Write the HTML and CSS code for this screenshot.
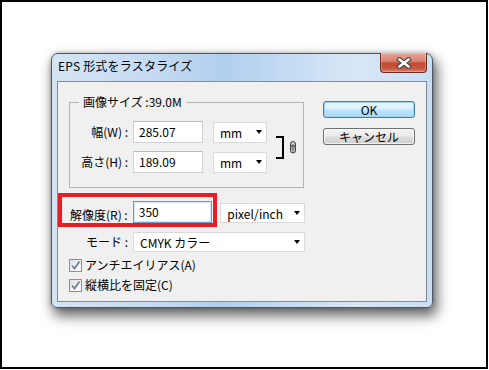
FILE: index.html
```html
<!DOCTYPE html>
<html lang="ja">
<head>
<meta charset="utf-8">
<title>EPS 形式をラスタライズ</title>
<link rel="stylesheet" href="styles.css">
</head>
<body>
<div class="frame">
  <div class="dialog">
    <div class="titlebar">
      <span class="title">EPS 形式をラスタライズ</span>
      <div class="close">
        <svg width="16" height="12" viewBox="0 0 16 12"><path d="M3.5 2.5 L12.5 9.5 M12.5 2.5 L3.5 9.5" stroke="#3f3f3f" stroke-width="4.6" stroke-linecap="square"/><path d="M3.5 2.5 L12.5 9.5 M12.5 2.5 L3.5 9.5" stroke="#ffffff" stroke-width="2.6" stroke-linecap="square"/></svg>
      </div>
    </div>
    <div class="client">
      <div class="left">
        <fieldset class="group">
          <legend>画像サイズ :39.0M</legend>
          <div class="group-body">
            <div class="dims">
              <div class="row">
                <span class="lbl">幅(W) :</span>
                <div class="input w70">285.07</div>
                <div class="select s-mm">mm<i class="arrow"></i></div>
              </div>
              <div class="row">
                <span class="lbl">高さ(H) :</span>
                <div class="input w70">189.09</div>
                <div class="select s-mm">mm<i class="arrow"></i></div>
              </div>
            </div>
            <div class="bracket"></div>
            <svg class="chain" width="8" height="13" viewBox="0 0 8 13"><rect x="1.5" y="0.5" width="5" height="7.5" rx="2.5" fill="#cfcfcf" stroke="#3a3a3a"/><rect x="1.5" y="4.5" width="5" height="7.5" rx="2.5" fill="#b8b8b8" stroke="#3a3a3a"/><line x1="4" y1="3" x2="4" y2="9.5" stroke="#555"/></svg>
          </div>
        </fieldset>
        <div class="row res-row">
          <span class="lbl lbl-out">解像度(R) :</span>
          <div class="input w80 focus">350</div>
          <div class="select s-unit">pixel/inch<i class="arrow"></i></div>
          <div class="highlight"></div>
        </div>
        <div class="row mode-row">
          <span class="lbl lbl-out">モード :</span>
          <div class="select s-mode">CMYK カラー<i class="arrow"></i></div>
        </div>
        <div class="checks">
          <div class="check-row">
            <span class="cb"><svg width="11" height="11" viewBox="0 0 11 11"><path d="M2 5.5 L4.5 8.5 L9.5 1.5" fill="none" stroke="#6d7fa0" stroke-width="1.8"/></svg></span>
            <span class="cb-label">アンチエイリアス(A)</span>
          </div>
          <div class="check-row">
            <span class="cb"><svg width="11" height="11" viewBox="0 0 11 11"><path d="M2 5.5 L4.5 8.5 L9.5 1.5" fill="none" stroke="#6d7fa0" stroke-width="1.8"/></svg></span>
            <span class="cb-label">縦横比を固定(C)</span>
          </div>
        </div>
      </div>
      <div class="buttons">
        <div class="btn btn-default">OK</div>
        <div class="btn">キャンセル</div>
      </div>
    </div>
  </div>
</div>
</body>
</html>
```
FILE: styles.css
```css
* { box-sizing: border-box; }
html, body { margin: 0; padding: 0; background: #fff; }
body { font-family: "Noto Sans CJK JP", "Noto Sans", sans-serif; font-size: 12px; color: #000; }

.frame {
  width: 488px;
  height: 369px;
  border: 2px solid #000;
  padding: 51px 0 0 49px;
  background: #fff;
}

.dialog {
  width: 382px;
  height: 255px;
  border: 1px solid #4b5666;
  border-radius: 7px 7px 6px 6px;
  padding: 0 5px 5px 5px;
  background: linear-gradient(90deg, #d5e4f4 0%, #c6dbf2 25%, #b2cfee 45%, #c4dbf3 62%, #d8e7f6 80%, #c9ddf3 100%);
  box-shadow: 3px 7px 13px 1px rgba(0,0,0,0.6), 0 0 4px rgba(0,0,0,0.25);
  display: flex;
  flex-direction: column;
}

.titlebar {
  height: 27px;
  display: flex;
  justify-content: space-between;
  align-items: flex-start;
}
.title {
  padding: 4px 0 0 1px;
  line-height: 16px;
  font-size: 12px;
  color: #000;
  letter-spacing: 0.2px;
}
.close {
  width: 47px;
  height: 20px;
  margin-top: -1px;
  border: 1px solid #6b2a22;
  border-top: none;
  border-radius: 0 0 4px 4px;
  background: linear-gradient(180deg, #e9a797 0%, #d98472 40%, #c24a36 55%, #c8553f 80%, #d9826a 100%);
  box-shadow: inset 0 0 0 1px rgba(255,255,255,0.25);
  display: flex;
  align-items: center;
  justify-content: center;
}

.client {
  height: 221px;
  border: 1px solid #7f8c9a;
  background: #f0f0f0;
  display: flex;
  padding: 12px 0 0 11px;
}

.left {
  width: 236px;
  display: flex;
  flex-direction: column;
}

.group {
  margin: 0;
  padding: 0 0 14px 0;
  border: 1px solid #b4b4b4;
  width: 235px;
  min-width: 0;
}
.group legend {
  margin-left: 9px;
  padding: 0 4px;
  line-height: 16px;
  font-size: 12px;
}
.group-body {
  display: flex;
  align-items: center;
  margin-top: 11px;
}
.dims {
  display: flex;
  flex-direction: column;
  gap: 8px;
}

.row {
  display: flex;
  align-items: center;
  height: 22px;
}
.lbl {
  width: 58px;
  margin-right: 5px;
  text-align: right;
  white-space: nowrap;
  line-height: 16px;
}
.lbl-out { width: 59px; }

.input {
  height: 22px;
  background: #fff;
  border: 1px solid #cfd3d8;
  border-top-color: #b7bcc2;
  padding-left: 5px;
  line-height: 20px;
  white-space: nowrap;
}
.w70 { width: 70px; }
.w80 { width: 80px; }
.input.focus {
  border: 1px solid #5c9fd6;
  box-shadow: inset 0 0 0 1px #d6e8f6;
}

.select {
  height: 21px;
  background: #fff;
  border: 1px solid #dadada;
  display: flex;
  align-items: center;
  justify-content: space-between;
  padding: 0 4px 0 6px;
  white-space: nowrap;
  line-height: 19px;
}
.arrow {
  width: 0;
  height: 0;
  border-left: 3.5px solid transparent;
  border-right: 3.5px solid transparent;
  border-top: 4px solid #000;
}
.s-mm { width: 54px; margin-left: 10px; }

.bracket {
  width: 8px;
  height: 23px;
  margin-left: 9px;
  border: 2px solid #000;
  border-left: none;
}
.chain { margin-left: 5px; margin-top: 1px; }

.res-row {
  position: relative;
  margin-top: 13px;
  align-items: flex-end;
}
.s-unit { width: 85px; height: 20px; margin-left: 8px; }
.highlight {
  position: absolute;
  left: -11px;
  top: -8px;
  width: 159px;
  height: 34px;
  border: 4px solid #ea1c24;
  pointer-events: none;
}

.mode-row {
  margin-top: 9px;
  height: 20px;
}
.s-mode { width: 172px; height: 20px; }

.checks {
  margin-top: 3px;
  display: flex;
  flex-direction: column;
}
.check-row {
  height: 20px;
  display: flex;
  align-items: center;
}
.cb {
  width: 13px;
  height: 13px;
  border: 1px solid #8f8f8f;
  background: linear-gradient(135deg, #dedede 0%, #f4f4f4 60%, #ffffff 100%);
  display: flex;
  align-items: center;
  justify-content: center;
}
.cb-label {
  margin-left: 3px;
  line-height: 16px;
}

.buttons {
  margin-left: 18px;
  margin-top: 7px;
  display: flex;
  flex-direction: column;
  gap: 10px;
}
.btn {
  width: 92px;
  height: 17px;
  border: 1px solid #707070;
  border-radius: 3px;
  background: linear-gradient(180deg, #f3f3f3 0%, #ebebeb 48%, #dddddd 52%, #d0d0d0 100%);
  box-shadow: inset 0 0 0 1px rgba(255,255,255,0.7);
  text-align: center;
  line-height: 15px;
  font-size: 12px;
}
.btn-default {
  border-color: #3c7fb1;
  background: linear-gradient(180deg, #eaf6fd 0%, #d9f0fc 48%, #bee6fd 52%, #a7d9f5 100%);
  box-shadow: inset 0 0 0 1px #9fd3f0;
}
```
